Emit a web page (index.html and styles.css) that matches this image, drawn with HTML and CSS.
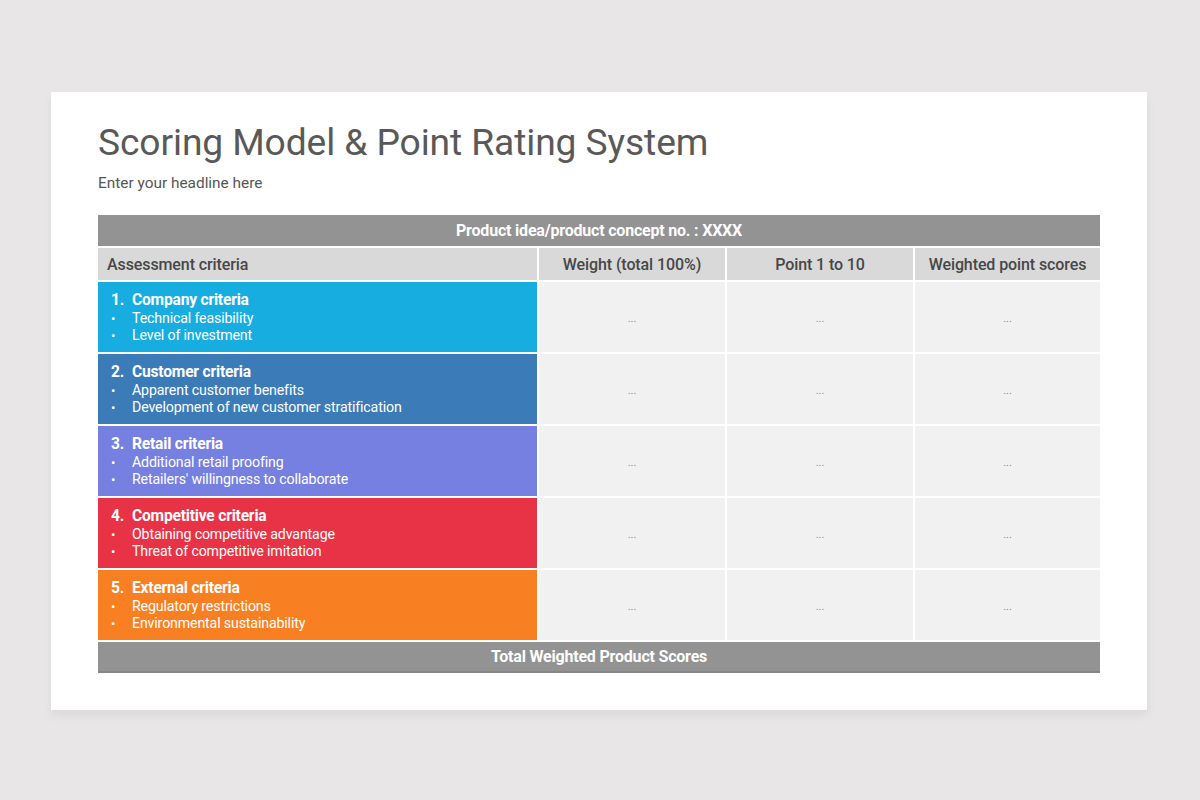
FILE: index.html
```html
<!DOCTYPE html>
<html lang="en">
<head>
<meta charset="utf-8">
<title>Scoring Model &amp; Point Rating System</title>
<link rel="stylesheet" href="styles.css">
</head>
<body>
<div class="slide">
  <h1 class="title">Scoring Model &amp; Point Rating System</h1>
  <p class="subtitle">Enter your headline here</p>
  <div class="table">
    <div class="cell top span">Product idea/product concept no. : XXXX</div>

    <div class="cell head left">Assessment criteria</div>
    <div class="cell head">Weight (total 100%)</div>
    <div class="cell head">Point 1 to 10</div>
    <div class="cell head">Weighted point scores</div>

    <div class="cell crit c1">
      <div class="crit-title"><span class="num">1.</span>Company criteria</div>
      <ul><li>Technical feasibility</li><li>Level of investment</li></ul>
    </div>
    <div class="cell val">...</div><div class="cell val">...</div><div class="cell val">...</div>

    <div class="cell crit c2">
      <div class="crit-title"><span class="num">2.</span>Customer criteria</div>
      <ul><li>Apparent customer benefits</li><li>Development of new customer stratification</li></ul>
    </div>
    <div class="cell val">...</div><div class="cell val">...</div><div class="cell val">...</div>

    <div class="cell crit c3">
      <div class="crit-title"><span class="num">3.</span>Retail criteria</div>
      <ul><li>Additional retail proofing</li><li>Retailers' willingness to collaborate</li></ul>
    </div>
    <div class="cell val">...</div><div class="cell val">...</div><div class="cell val">...</div>

    <div class="cell crit c4">
      <div class="crit-title"><span class="num">4.</span>Competitive criteria</div>
      <ul><li>Obtaining competitive advantage</li><li>Threat of competitive imitation</li></ul>
    </div>
    <div class="cell val">...</div><div class="cell val">...</div><div class="cell val">...</div>

    <div class="cell crit c5">
      <div class="crit-title"><span class="num">5.</span>External criteria</div>
      <ul><li>Regulatory restrictions</li><li>Environmental sustainability</li></ul>
    </div>
    <div class="cell val">...</div><div class="cell val">...</div><div class="cell val">...</div>

    <div class="cell foot span">Total Weighted Product Scores</div>
  </div>
</div>
</body>
</html>
```

FILE: styles.css
```css
html, body {
  margin: 0;
  padding: 0;
}
body {
  background: #e8e6e7;
  font-family: Roboto, "Liberation Sans", sans-serif;
  width: 1200px;
  height: 800px;
  overflow: hidden;
}
.slide {
  box-sizing: border-box;
  margin: 92px 0 0 51px;
  width: 1096px;
  height: 618px;
  background: #ffffff;
  box-shadow: 0 6px 10px rgba(0,0,0,0.06);
  padding: 0 47px;
  overflow: hidden;
}
.title {
  margin: 0;
  padding-top: 27px;
  font-size: 37.2px;
  font-weight: 400;
  line-height: 46px;
  color: #595959;
  letter-spacing: -0.1px;
}
.subtitle {
  margin: 9px 0 0 0;
  font-size: 15.4px;
  line-height: 18px;
  color: #555555;
}
.table {
  margin-top: 23px;
  display: grid;
  grid-template-columns: 439px 186px 186px 1fr;
  grid-template-rows: 31px 32px repeat(5, 70px) 31px;
  gap: 2px;
}
.cell {
  box-sizing: border-box;
}
.span {
  grid-column: 1 / -1;
}
.top, .foot {
  background: #939393;
  color: #ffffff;
  font-weight: 700;
  font-size: 16px;
  letter-spacing: -0.2px;
  display: flex;
  align-items: center;
  justify-content: center;
}
.foot {
  border-bottom: 2px solid #868686;
}
.head {
  background: #d9d9d9;
  color: #474747;
  font-weight: 500;
  font-size: 16px;
  letter-spacing: -0.1px;
  display: flex;
  align-items: center;
  justify-content: center;
}
.head.left {
  justify-content: flex-start;
  padding-left: 9px;
}
.val {
  background: #f1f1f1;
  color: #8a8a8a;
  font-size: 11px;
  padding-top: 2px;
  display: flex;
  align-items: center;
  justify-content: center;
}
.crit {
  color: #ffffff;
  padding: 9px 0 0 13px;
}
.crit-title {
  font-weight: 700;
  font-size: 15.6px;
  line-height: 19px;
  letter-spacing: -0.2px;
}
.num {
  display: inline-block;
  width: 21px;
}
.crit ul {
  list-style: none;
  margin: 0;
  padding: 0;
}
.crit li {
  font-size: 14.2px;
  line-height: 17px;
  letter-spacing: -0.15px;
  padding-left: 21px;
  position: relative;
}
.crit li::before {
  content: "\2022";
  position: absolute;
  left: 0;
  top: 0;
  font-size: 13px;
}
.c1 { background: #17ade0; }
.c2 { background: #3b7bb8; }
.c3 { background: #7680e0; }
.c4 { background: #e83347; }
.c5 { background: #f88023; }
```
